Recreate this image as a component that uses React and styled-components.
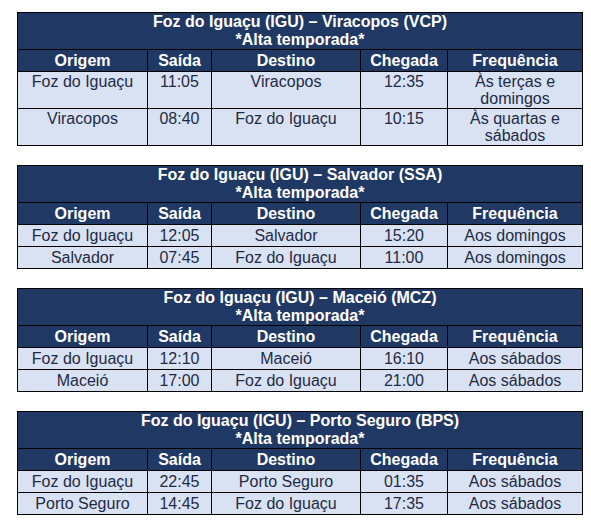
import React from 'react';
import styled, { createGlobalStyle } from "styled-components";

const GlobalStyle = createGlobalStyle`
  body {
    margin: 0;
    background: #ffffff;
    font-family: "Liberation Sans", Arial, sans-serif;
  }
`

const Page = styled.div`
  display: flex;
  flex-direction: column;
  gap: 19px;
  padding: 12px 0 0 17px;
`

const RouteTable = styled.table`
  width: 565px;
  table-layout: fixed;
  border-collapse: collapse;
  font-size: 16px;
  border: 1px solid #000;
`

const TitleCell = styled.th`
  background: #1f3864;
  color: #fff;
  font-weight: bold;
  line-height: 18px;
  padding: 0;
  border: 1px solid #000;
  text-align: center;
`

const HeadCell = styled.th`
  box-sizing: content-box;
  background: #1f3864;
  color: #fff;
  font-weight: bold;
  line-height: 18px;
  height: 20px;
  padding: 1px 2px 0;
  border: 1px solid #000;
  text-align: center;
`

const Cell = styled.td`
  box-sizing: content-box;
  background: #d9e2f3;
  color: #1f2a44;
  line-height: 17px;
  padding: ${props => props.tall ? "1px 4px 0" : "2px 4px 0"};
  height: ${props => props.tall ? "35px" : "19px"};
  border: 1px solid #000;
  text-align: center;
  vertical-align: top;
`

const widths = [130, 64, 149, 87, 135];
const heads = ["Origem", "Saída", "Destino", "Chegada", "Frequência"];

const routes = [
  {
    title: "Foz do Iguaçu (IGU) – Viracopos (VCP)",
    tall: true,
    rows: [
      ["Foz do Iguaçu", "11:05", "Viracopos", "12:35", "Às terças e domingos"],
      ["Viracopos", "08:40", "Foz do Iguaçu", "10:15", "Às quartas e sábados"],
    ],
  },
  {
    title: "Foz do Iguaçu (IGU) – Salvador (SSA)",
    rows: [
      ["Foz do Iguaçu", "12:05", "Salvador", "15:20", "Aos domingos"],
      ["Salvador", "07:45", "Foz do Iguaçu", "11:00", "Aos domingos"],
    ],
  },
  {
    title: "Foz do Iguaçu (IGU) – Maceió (MCZ)",
    rows: [
      ["Foz do Iguaçu", "12:10", "Maceió", "16:10", "Aos sábados"],
      ["Maceió", "17:00", "Foz do Iguaçu", "21:00", "Aos sábados"],
    ],
  },
  {
    title: "Foz do Iguaçu (IGU) – Porto Seguro (BPS)",
    rows: [
      ["Foz do Iguaçu", "22:45", "Porto Seguro", "01:35", "Aos sábados"],
      ["Porto Seguro", "14:45", "Foz do Iguaçu", "17:35", "Aos sábados"],
    ],
  },
];

function Route({ route }) {
  return (
    <RouteTable>
      <colgroup>
        {widths.map((w, i) => <col key={i} style={{ width: w }} />)}
      </colgroup>
      <thead>
        <tr>
          <TitleCell colSpan={5}>
            {route.title}<br />*Alta temporada*
          </TitleCell>
        </tr>
        <tr>
          {heads.map(h => <HeadCell key={h}>{h}</HeadCell>)}
        </tr>
      </thead>
      <tbody>
        {route.rows.map((row, r) => (
          <tr key={r}>
            {row.map((c, i) => <Cell key={i} tall={route.tall}>{c}</Cell>)}
          </tr>
        ))}
      </tbody>
    </RouteTable>
  );
}

export default function App() {
  return (
    <>
      <GlobalStyle />
      <Page>
        {routes.map(r => <Route key={r.title} route={r} />)}
      </Page>
    </>
  );
}
